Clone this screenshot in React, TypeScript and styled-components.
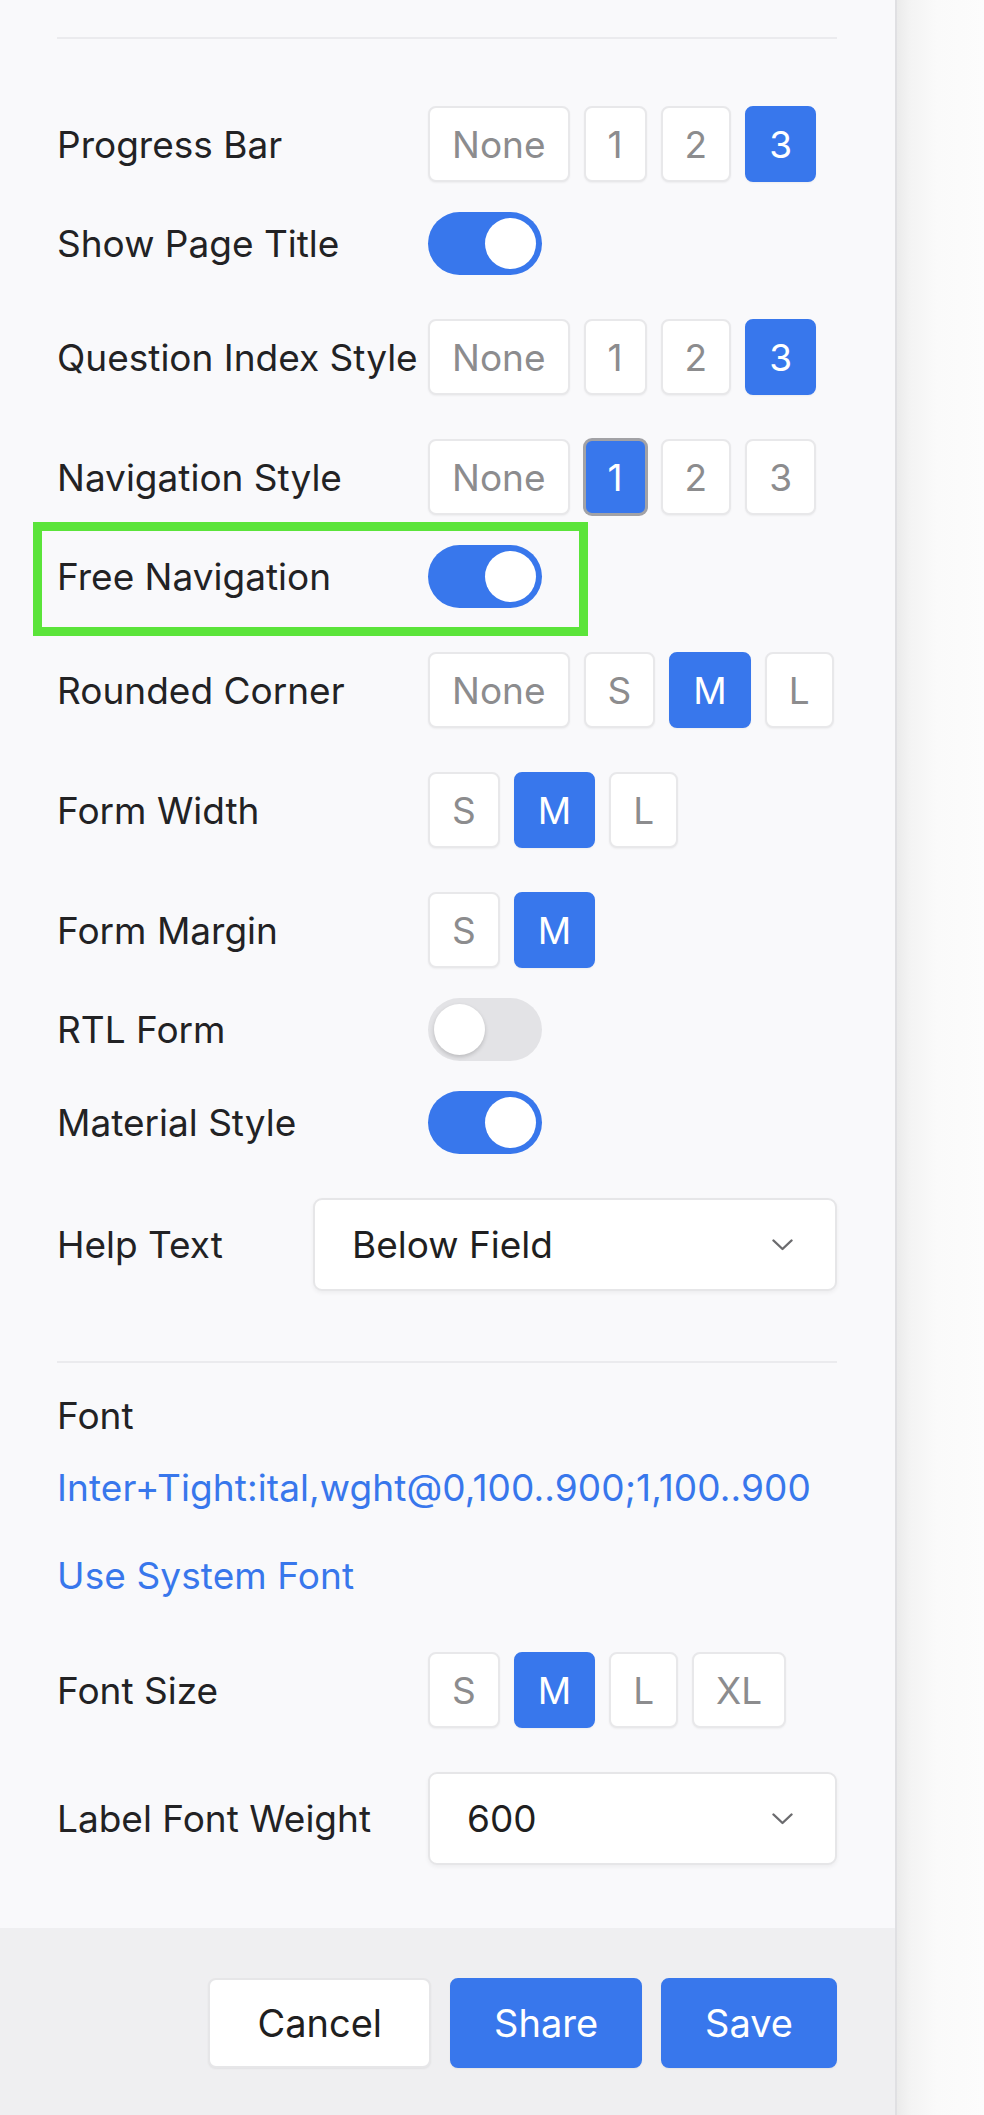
import React from 'react';
import styled, { createGlobalStyle, css } from 'styled-components';

const GlobalStyle = createGlobalStyle`
	html, body {
		margin: 0;
		padding: 0;
		background: #fcfcfc;
	}
	body {
		font-family: 'Inter', 'Noto Sans', sans-serif;
		-webkit-font-smoothing: antialiased;
	}
`;

const BLUE = '#3877ec';

const Page = styled.div`
	display: flex;
	min-height: 2115px;
`;

const Panel = styled.div`
	width: 895px;
	flex: 0 0 895px;
	display: flex;
	flex-direction: column;
	background: #f9f9fb;
	border-right: 2px solid #e0e0e3;
`;

const Backdrop = styled.div`
	flex: 1;
	background: linear-gradient(90deg, #ebebeb 0, #f4f4f4 14px, #fafafa 40px, #fcfcfc 100%);
`;

const Body = styled.div`
	flex: 1;
	padding: 37px 58px 62px 57px;
	display: flex;
	flex-direction: column;
`;

const Divider = styled.hr<{ $top?: number }>`
	margin: ${(p) => p.$top ?? 0}px 0 0;
	border: none;
	height: 2px;
	background: #ebebee;
`;

const List = styled.div`
	display: flex;
	flex-direction: column;
	gap: 30px;
	padding-top: 53px;
`;

interface RowProps {
	$spaced?: boolean;
	$highlight?: boolean;
}

const Row = styled.div<RowProps>`
	position: relative;
	display: flex;
	align-items: center;
	padding-top: ${(p) => (p.$spaced ? 14 : 0)}px;

	${(p) =>
		p.$highlight &&
		css`
			&::after {
				content: '';
				position: absolute;
				left: -24px;
				top: -23px;
				width: 555px;
				height: 114px;
				box-sizing: border-box;
				border: 9px solid #5be43a;
				pointer-events: none;
			}
		`}
`;

const Label = styled.div<{ $width?: number }>`
	flex: 0 0 ${(p) => p.$width ?? 371}px;
	font-size: 37px;
	color: #222224;
	white-space: nowrap;
`;

const Group = styled.div`
	display: flex;
	gap: 14px;
`;

interface OptionProps {
	$active?: boolean;
	$focused?: boolean;
}

const Option = styled.button<OptionProps>`
	height: 76px;
	padding: 0 22px;
	border-radius: 8px;
	border: 2px solid ${(p) => (p.$focused ? '#a2a2a6' : p.$active ? BLUE : '#e8e8ea')};
	background: ${(p) => (p.$active ? BLUE : '#ffffff')};
	color: ${(p) => (p.$active ? '#ffffff' : '#8c8c8e')};
	font-family: inherit;
	font-size: 37px;
	line-height: 1;
	box-shadow: ${(p) => (p.$focused ? '0 0 0 1px #a2a2a6' : '0 1px 2px rgba(0, 0, 0, 0.05)')};
	cursor: pointer;
`;

const Track = styled.button<{ $on?: boolean }>`
	width: 114px;
	height: 63px;
	padding: 0 6px;
	border: none;
	border-radius: 32px;
	display: flex;
	align-items: center;
	justify-content: ${(p) => (p.$on ? 'flex-end' : 'flex-start')};
	background: ${(p) => (p.$on ? BLUE : '#e3e3e6')};
	cursor: pointer;
`;

const Knob = styled.span<{ $on?: boolean }>`
	width: 51px;
	height: 51px;
	border-radius: 50%;
	background: #ffffff;
	box-shadow: ${(p) => (p.$on ? 'none' : '0 2px 4px rgba(0, 0, 0, 0.18)')};
`;

const SelectBox = styled.div`
	flex: 1;
	height: 93px;
	box-sizing: border-box;
	display: flex;
	align-items: center;
	justify-content: space-between;
	padding: 0 42px 0 37px;
	background: #ffffff;
	border: 2px solid #e6e6e8;
	border-radius: 9px;
	box-shadow: 0 2px 4px rgba(0, 0, 0, 0.05);
	font-size: 37px;
	color: #1f1f21;
`;

const FontBlock = styled.div`
	display: flex;
	flex-direction: column;
	padding-top: 31px;
	font-size: 37px;
	line-height: 44px;
`;

const FontTitle = styled.div`
	color: #222224;
`;

const FontLink = styled.a<{ $gap: number }>`
	margin-top: ${(p) => p.$gap}px;
	color: ${BLUE};
	text-decoration: none;
	white-space: nowrap;
	letter-spacing: 0.1px;
`;

const FontList = styled(List)`
	padding-top: 40px;
`;

const Footer = styled.div`
	height: 187px;
	box-sizing: border-box;
	background: #efeff1;
	display: flex;
	justify-content: flex-end;
	align-items: flex-start;
	gap: 19px;
	padding: 50px 58px 0 0;
`;

const FooterButton = styled.button<{ $primary?: boolean }>`
	height: 90px;
	padding: 0 ${(p) => (p.$primary ? 42 : 47)}px;
	border-radius: 8px;
	font-family: inherit;
	font-size: 38px;
	cursor: pointer;
	border: 2px solid ${(p) => (p.$primary ? BLUE : '#e6e6e8')};
	background: ${(p) => (p.$primary ? BLUE : '#ffffff')};
	color: ${(p) => (p.$primary ? '#ffffff' : '#1f1f21')};
	box-shadow: 0 1px 2px rgba(0, 0, 0, 0.06);
`;

const Chevron = () => (
	<svg width="21" height="12" viewBox="0 0 21 12" fill="none">
		<polyline points="1.5,1.5 10.5,10 19.5,1.5" stroke="#6b6b6e" strokeWidth="2.4" strokeLinecap="round" strokeLinejoin="round" />
	</svg>
);

interface ChoiceRowProps {
	label: string;
	options: string[];
	value: string;
	focused?: boolean;
}

const ChoiceRow = ({ label, options, value, focused }: ChoiceRowProps) => (
	<Row $spaced>
		<Label>{label}</Label>
		<Group>
			{options.map((o) => (
				<Option key={o} $active={o === value} $focused={focused && o === value}>
					{o}
				</Option>
			))}
		</Group>
	</Row>
);

interface ToggleRowProps {
	label: string;
	on: boolean;
	highlight?: boolean;
}

const ToggleRow = ({ label, on, highlight }: ToggleRowProps) => (
	<Row $highlight={highlight}>
		<Label>{label}</Label>
		<Track $on={on}>
			<Knob $on={on} />
		</Track>
	</Row>
);

const SelectRow = ({ label, value, labelWidth }: { label: string; value: string; labelWidth: number }) => (
	<Row $spaced>
		<Label $width={labelWidth}>{label}</Label>
		<SelectBox>
			<span>{value}</span>
			<Chevron />
		</SelectBox>
	</Row>
);

const App = () => {
	const numbered = ['None', '1', '2', '3'];

	return (
		<>
			<GlobalStyle />
			<Page>
				<Panel>
					<Body>
						<Divider />
						<List>
							<ChoiceRow label="Progress Bar" options={numbered} value="3" />
							<ToggleRow label="Show Page Title" on />
							<ChoiceRow label="Question Index Style" options={numbered} value="3" />
							<ChoiceRow label="Navigation Style" options={numbered} value="1" focused />
							<ToggleRow label="Free Navigation" on highlight />
							<ChoiceRow label="Rounded Corner" options={['None', 'S', 'M', 'L']} value="M" />
							<ChoiceRow label="Form Width" options={['S', 'M', 'L']} value="M" />
							<ChoiceRow label="Form Margin" options={['S', 'M']} value="M" />
							<ToggleRow label="RTL Form" on={false} />
							<ToggleRow label="Material Style" on />
							<SelectRow label="Help Text" value="Below Field" labelWidth={256} />
						</List>
						<Divider $top={70} />
						<FontBlock>
							<FontTitle>Font</FontTitle>
							<FontLink $gap={28}>Inter+Tight:ital,wght@0,100..900;1,100..900</FontLink>
							<FontLink $gap={44}>Use System Font</FontLink>
						</FontBlock>
						<FontList>
							<ChoiceRow label="Font Size" options={['S', 'M', 'L', 'XL']} value="M" />
							<SelectRow label="Label Font Weight" value="600" labelWidth={371} />
						</FontList>
					</Body>
					<Footer>
						<FooterButton>Cancel</FooterButton>
						<FooterButton $primary>Share</FooterButton>
						<FooterButton $primary>Save</FooterButton>
					</Footer>
				</Panel>
				<Backdrop />
			</Page>
		</>
	);
};

export default App;
